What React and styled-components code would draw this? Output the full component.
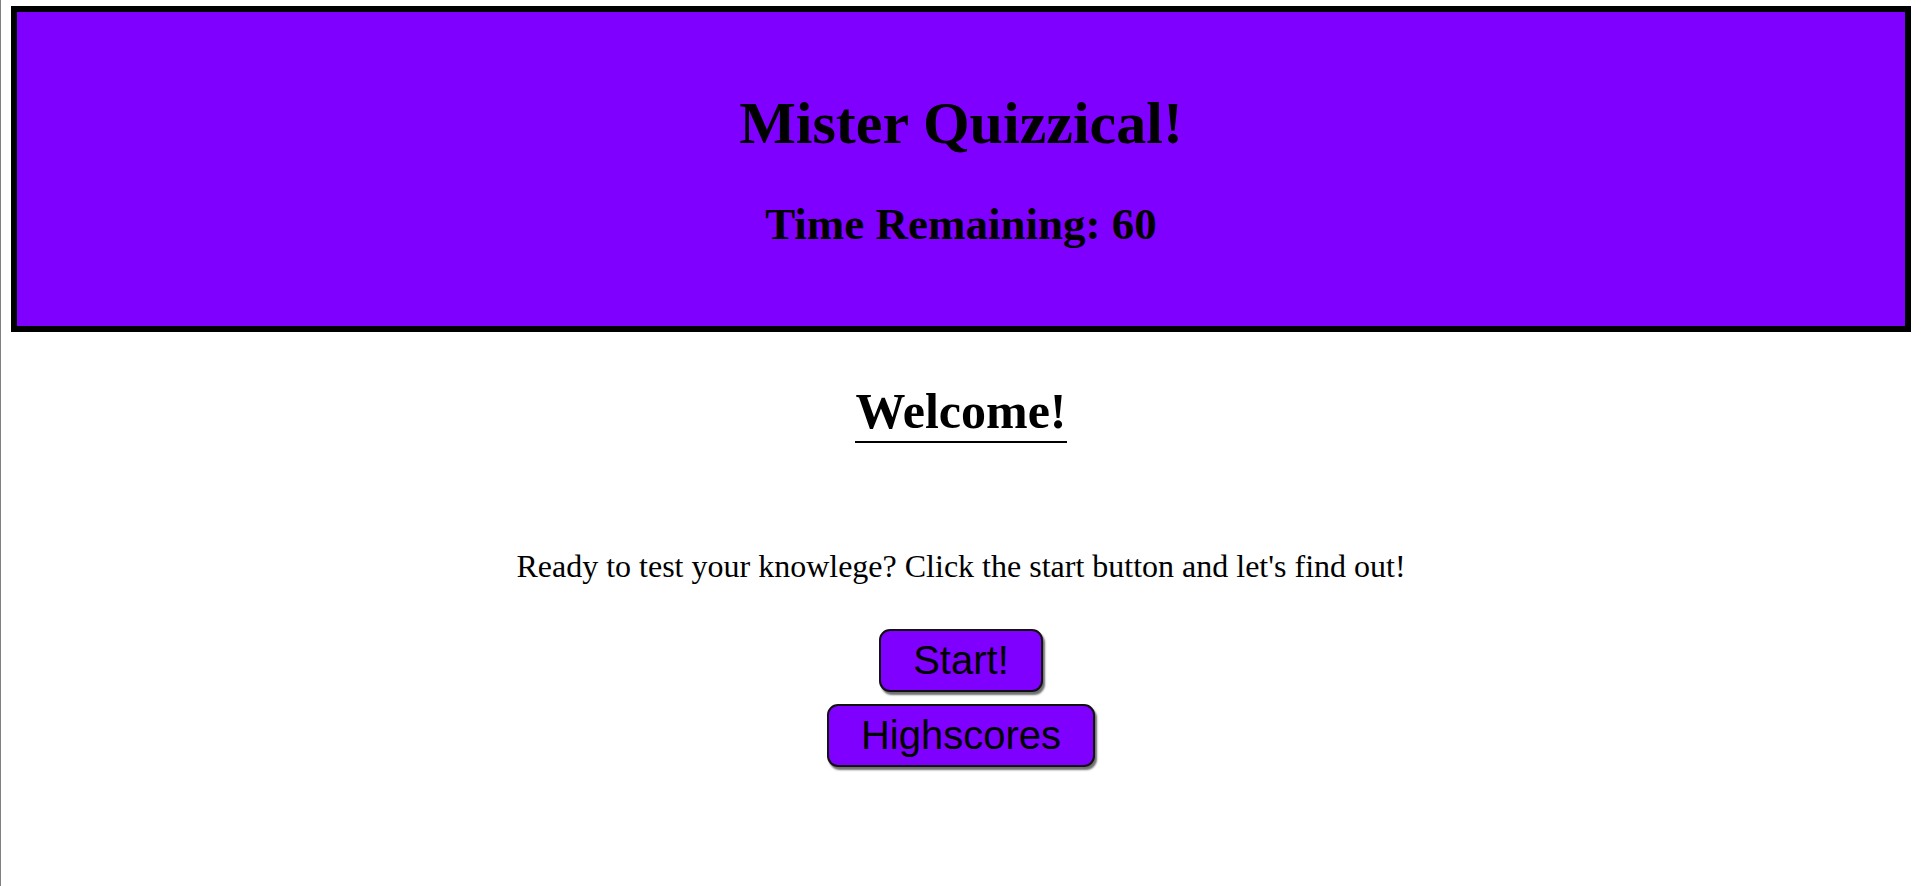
import React from "react";
import styled, { createGlobalStyle } from "styled-components";

const GlobalStyle = createGlobalStyle`
  html, body {
    margin: 0;
    padding: 0;
    background: #ffffff;
  }
  body {
    font-family: "Liberation Serif", "Times New Roman", serif;
    color: #000000;
  }
  * {
    box-sizing: border-box;
  }
`;

const Page = styled.div`
  min-height: 100vh;
  border-left: 1px solid #808080;
  padding: 6px 10px 40px 10px;
`;

const Header = styled.header`
  background: #8000ff;
  border: 6px solid #000000;
  padding: 77px 0 76px;
  display: flex;
  flex-direction: column;
  align-items: center;
  gap: 41px;
`;

const Title = styled.h1`
  margin: 0;
  font-size: 60px;
  line-height: 69px;
  font-weight: bold;
`;

const Timer = styled.h2`
  margin: 0;
  font-size: 45px;
  line-height: 51px;
  font-weight: bold;
`;

const Main = styled.main`
  display: flex;
  flex-direction: column;
  align-items: center;
  padding-top: 50px;
`;

const Welcome = styled.h2`
  margin: 0;
  font-size: 50px;
  line-height: 58px;
  font-weight: bold;
  padding-bottom: 1px;
  border-bottom: 2px solid #000000;
`;

const Intro = styled.p`
  margin: 105px 0 44px;
  font-size: 32px;
  line-height: 37px;
`;

const ButtonStack = styled.div`
  display: flex;
  flex-direction: column;
  align-items: center;
  gap: 12px;
`;

const QuizButton = styled.button`
  font-family: "Liberation Sans", Arial, sans-serif;
  font-size: 40px;
  line-height: 46px;
  color: #000000;
  background: #8000ff;
  border: 2px solid #111111;
  border-radius: 11px;
  padding: 6px 32px 7px;
  box-shadow: 2px 3px 2px #707070;
  cursor: pointer;
`;

export default function App() {
  return (
    <>
      <GlobalStyle />
      <Page>
        <Header>
          <Title>Mister Quizzical!</Title>
          <Timer>Time Remaining: 60</Timer>
        </Header>
        <Main>
          <Welcome>Welcome!</Welcome>
          <Intro>
            Ready to test your knowlege? Click the start button and let's find out!
          </Intro>
          <ButtonStack>
            <QuizButton>Start!</QuizButton>
            <QuizButton>Highscores</QuizButton>
          </ButtonStack>
        </Main>
      </Page>
    </>
  );
}
